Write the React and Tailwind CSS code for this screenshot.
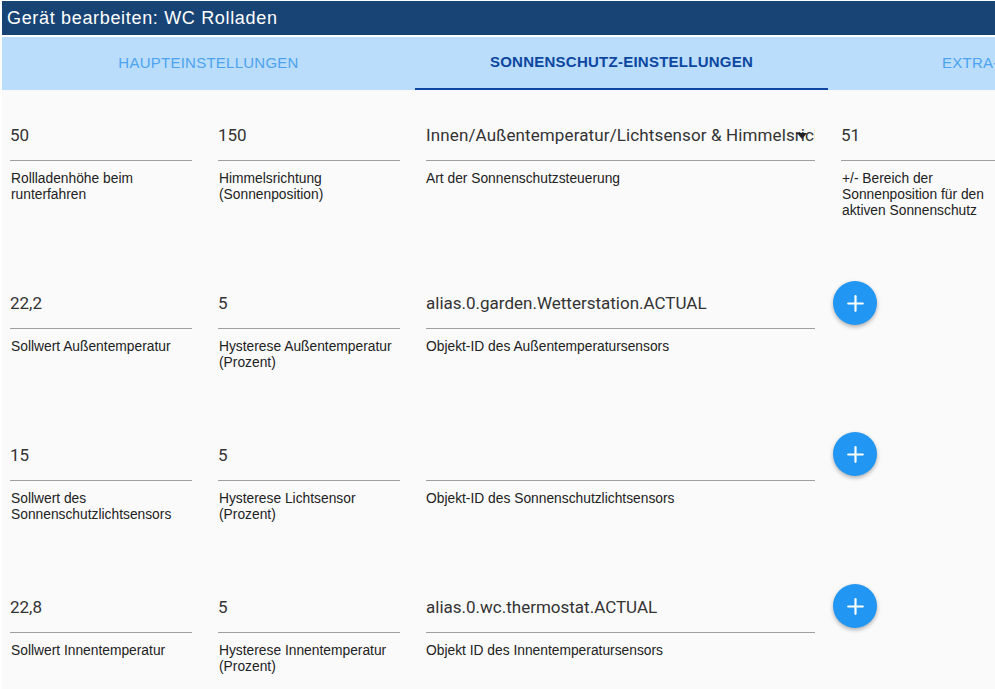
import React from 'react';
import { Plus } from 'lucide-react';

const rows = [
  {
    h: 'h-[168px]',
    cells: [
      { value: '50', label: 'Rollladenhöhe beim runterfahren' },
      { value: '150', label: 'Himmelsrichtung (Sonnenposition)' },
      { value: 'Innen/Außentemperatur/Lichtsensor & Himmelsrichtung', label: 'Art der Sonnenschutzsteuerung', select: true },
    ],
    extra: { value: '51', label: '+/- Bereich der Sonnenposition für den aktiven Sonnenschutz' },
  },
  {
    h: 'h-[152px]',
    btn: 'mt-[-7px]',
    cells: [
      { value: '22,2', label: 'Sollwert Außentemperatur' },
      { value: '5', label: 'Hysterese Außentemperatur (Prozent)' },
      { value: 'alias.0.garden.Wetterstation.ACTUAL', label: 'Objekt-ID des Außentemperatursensors' },
    ],
  },
  {
    h: 'h-[152px]',
    btn: 'mt-[-8px]',
    cells: [
      { value: '15', label: 'Sollwert des Sonnenschutzlichtsensors' },
      { value: '5', label: 'Hysterese Lichtsensor (Prozent)' },
      { value: '', label: 'Objekt-ID des Sonnenschutzlichtsensors' },
    ],
  },
  {
    h: 'h-[105px]',
    btn: 'mt-[-8px]',
    cells: [
      { value: '22,8', label: 'Sollwert Innentemperatur' },
      { value: '5', label: 'Hysterese Innentemperatur (Prozent)' },
      { value: 'alias.0.wc.thermostat.ACTUAL', label: 'Objekt ID des Innentemperatursensors' },
    ],
  },
];

// Eingabefeld mit Linie und Hilfetext
const Field = ({ value, label, select, width, labelPad = 'pl-px' }) => (
  <div className={`${width} shrink-0`}>
    <div className="relative h-[40px] border-b border-[#a0a0a0] box-content">
      <div className={`overflow-hidden whitespace-nowrap h-[40px] w-full pt-[3px] text-[17px] leading-[24px] text-[#333333] font-['Roboto',sans-serif] ${select ? 'tracking-[0.12px]' : ''}`}>
        {value}
      </div>
      {select && (
        <div className="absolute right-[8px] top-[13px] w-0 h-0 border-l-[5px] border-r-[5px] border-t-[6px] border-l-transparent border-r-transparent border-t-[#222222]" />
      )}
    </div>
    <p className={`mt-[10px] ${labelPad} text-[13.8px] leading-[16px] text-[#222222] font-['Liberation_Sans',Arial,sans-serif]`}>
      {label}
    </p>
  </div>
);

const AddButton = ({ className }) => (
  <button className={`w-[44px] h-[44px] -ml-[8px] ${className} rounded-full bg-[#2196f3] text-white flex items-center justify-center shadow-[0_2px_4px_rgba(0,0,0,0.3)]`}>
    <Plus size={25} strokeWidth={2.1} />
  </button>
);

export default function App() {
  return (
    <div className="w-[995px] h-[689px] overflow-hidden bg-white pl-[2px] pt-px font-['Liberation_Sans',Arial,sans-serif]">
      <div className="h-[34px] bg-[#184475] pl-[5px] flex items-center text-white text-[18px] tracking-[0.67px]">
        Gerät bearbeiten: WC Rolladen
      </div>
      <div className="h-[2px] bg-white" />
      <div className="h-[53px] bg-[#b9ddfa] flex overflow-hidden text-[15px] tracking-[0.25px]">
        <div className="w-[413px] shrink-0 flex items-center justify-center text-[#4da3f0]">HAUPTEINSTELLUNGEN</div>
        <div className="w-[413px] shrink-0 flex items-center justify-center font-bold text-[#0d47a1] border-b-2 border-[#0d47a1]">
          SONNENSCHUTZ-EINSTELLUNGEN
        </div>
        <div className="w-[413px] shrink-0 flex items-center justify-center text-[#4da3f0]">EXTRA-EINSTELLUNGEN</div>
      </div>
      <div className="h-[599px] bg-[#fafafa] pl-[8px] pt-[30px]">
        {rows.map((row, i) => (
          <div key={i} className={`flex gap-[26px] ${row.h}`}>
            <Field {...row.cells[0]} width="w-[182px]" />
            <Field {...row.cells[1]} width="w-[182px]" />
            <Field {...row.cells[2]} width="w-[389px]" labelPad="pl-0" />
            {row.extra ? <Field {...row.extra} width="w-[160px]" /> : <AddButton className={row.btn} />}
          </div>
        ))}
      </div>
    </div>
  );
}
